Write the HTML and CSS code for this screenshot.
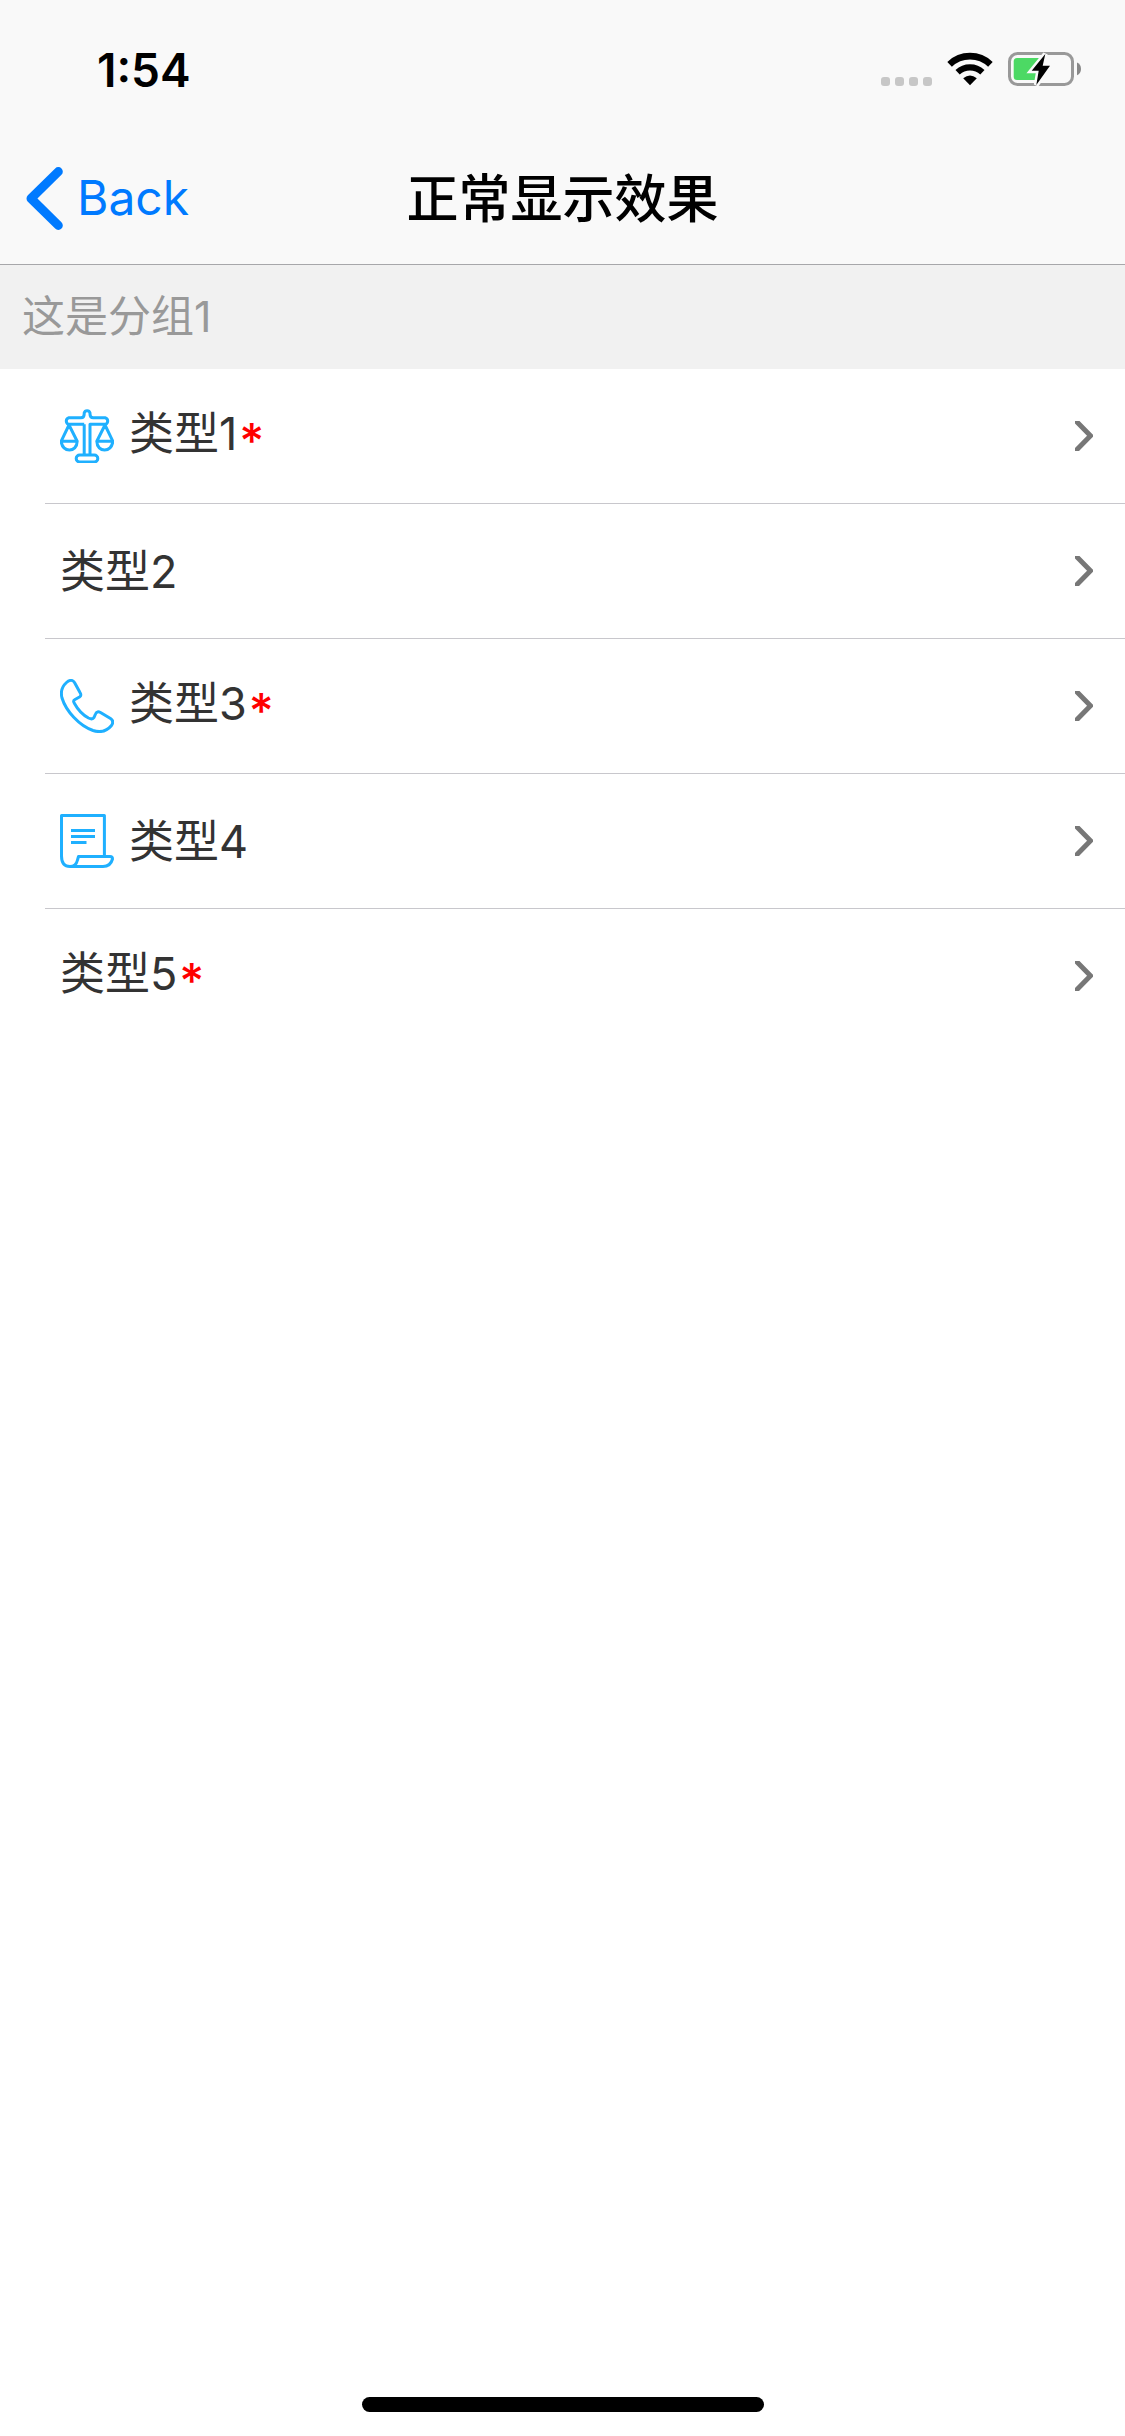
FILE: index.html
```html
<!DOCTYPE html>
<html lang="zh-CN">
<head>
<meta charset="utf-8">
<meta name="viewport" content="width=device-width, initial-scale=1">
<title>正常显示效果</title>
<link rel="stylesheet" href="styles.css">
</head>
<body>
<div class="screen">
  <header class="top">
    <div class="status">
      <time class="clock">1:54</time>
      <div class="indicators">
        <svg width="51" height="9" viewBox="0 0 51 9" fill="#c7c7c7" aria-hidden="true">
          <rect x="0" width="9" height="9" rx="3"/><rect x="14" width="9" height="9" rx="3"/><rect x="28" width="9" height="9" rx="3"/><rect x="42" width="9" height="9" rx="3"/>
        </svg>
        <svg width="46" height="34" viewBox="0 0 46 34" aria-hidden="true">
          <path d="M2.6 12.3A29.5 29.5 0 0 1 43.4 12.3" fill="none" stroke="#000" stroke-width="6.6"/>
          <path d="M10.6 20.2A18.2 18.2 0 0 1 35.4 20.2" fill="none" stroke="#000" stroke-width="6.2"/>
          <path d="M16.2 26.3Q23 20.7 29.8 26.3L23 33.2Z"/>
        </svg>
        <svg width="73" height="34" viewBox="0 0 73 34" aria-hidden="true">
          <rect x="1.5" y="1.5" width="63" height="31" rx="8" fill="none" stroke="#999" stroke-width="3"/>
          <path d="M69 10.6Q73 12.4 73 17T69 23.2Z" fill="#888"/>
          <path d="M9 6H33L27 28H9Q5.700 28 5.700 24.500V9.500Q5.700 6 9 6Z" fill="#4cd964"/>
          <path d="M37.300 2L34.700 13.700H42L28.300 33L30.700 18.700H23.700Z" fill="#000" stroke="#f9f9f9" stroke-width="5" paint-order="stroke"/>
        </svg>
      </div>
    </div>
    <nav class="nav">
      <a class="back" href="#">
        <svg width="37" height="63" viewBox="0 0 37 63" fill="none" stroke="#007aff" stroke-width="9" stroke-linecap="round" stroke-linejoin="round" aria-hidden="true"><path d="M32.300 4.600L5 31.500L32.300 58.400"/></svg>
        <span>Back</span>
      </a>
      <h1 class="title">正常显示效果</h1>
    </nav>
  </header>

  <main class="content">
    <h2 class="group">这是分组1</h2>
    <ul class="list">
      <li class="item"><a class="row" href="#">
        <svg class="icon" viewBox="0 0 54 54" aria-hidden="true">
          <path d="M24.200 15.300H8.500A3.500 3.500 0 0 1 8.500 8.800H21Q24.200 8.800 24.200 5V4A3 3 0 0 1 30 4V5Q30 8.800 33.200 8.800H45.500A3.500 3.500 0 0 1 45.500 15.300H30V46M24.200 15.300V46"/>
          <rect x="16.200" y="46" width="21.600" height="7" rx="3.500"/>
          <path d="M9 16L1.200 32.200H17.200ZM1.200 32.200C2 44 17 44 17.200 32.200M45 16L36.800 32.200H52.800ZM36.800 32.200C37 44 52 44 52.800 32.200"/>
        </svg>
        <span class="label raised">类型1<span class="star">*</span></span>
        <svg class="chevron" viewBox="0 0 18 30" aria-hidden="true"><path d="M1 0L15.500 14.800L1.500 29"/></svg>
      </a></li>
      <li class="item"><a class="row" href="#">
        <span class="label">类型2</span>
        <svg class="chevron" viewBox="0 0 18 30" aria-hidden="true"><path d="M1 0L15.500 14.800L1.500 29"/></svg>
      </a></li>
      <li class="item"><a class="row" href="#">
        <svg class="icon" viewBox="0 0 54 54" aria-hidden="true">
          <path d="M6.500 3.500C9.500 0.800 12.500 0.500 14.500 3.500L20 13.500C21.500 16 21 17 19.500 18L15 20.500C13 21.600 13.400 22.500 14.500 24.500C18 31 22 35.500 28.500 39Q32.500 41 34 38.500L35.500 35C36.500 32.500 38.500 32.500 40.500 33.500L50.500 39.500C53.500 41.500 53.500 43.500 51.500 46.500C47 52 41 54 33 51.500C19 46.500 6 32 2 19C0.500 13 2 7.500 6.500 3.500Z"/>
        </svg>
        <span class="label raised">类型3<span class="star">*</span></span>
        <svg class="chevron" viewBox="0 0 18 30" aria-hidden="true"><path d="M1 0L15.500 14.800L1.500 29"/></svg>
      </a></li>
      <li class="item"><a class="row" href="#">
        <svg class="icon" viewBox="0 0 54 54" aria-hidden="true">
          <path d="M44.400 42V1.500H1.500V42Q1.500 52.500 10 52.500Q16 52.500 17.500 46L18.500 42.500H50Q52.500 42.500 52.500 45Q50.500 52.500 43 52.500H10"/>
          <path d="M11 16.500H35M11 22.500H35M11 28.500H26.500"/>
        </svg>
        <span class="label">类型4</span>
        <svg class="chevron" viewBox="0 0 18 30" aria-hidden="true"><path d="M1 0L15.500 14.800L1.500 29"/></svg>
      </a></li>
      <li class="item"><a class="row" href="#">
        <span class="label raised">类型5<span class="star">*</span></span>
        <svg class="chevron" viewBox="0 0 18 30" aria-hidden="true"><path d="M1 0L15.500 14.800L1.500 29"/></svg>
      </a></li>
    </ul>
  </main>

  <footer class="home"><div class="home-bar"></div></footer>
</div>
</body>
</html>
```
FILE: styles.css
```css
* { box-sizing: border-box; }

body {
  margin: 0;
  background: #fff;
  color: #333;
  font-family: Inter, "Noto Sans CJK SC", sans-serif;
}

svg { display: block; flex: none; }
a { color: inherit; text-decoration: none; }

.screen {
  display: flex;
  flex-direction: column;
  min-height: 100vh;
}

.top {
  background: #f9f9f9;
  border-bottom: 1px solid #a7a7aa;
}

.status {
  display: flex;
  justify-content: space-between;
  align-items: center;
  height: 132px;
  padding: 6px 44px 0 97px;
}

.clock {
  padding-top: 2px;
  color: #000;
  font-size: 46px;
  font-weight: 600;
  line-height: 60px;
}

.indicators {
  display: flex;
  align-items: flex-end;
  gap: 15px;
}

.nav {
  display: grid;
  grid-template-columns: 1fr auto 1fr;
  align-items: center;
  height: 132px;
  padding: 0 26px;
}

.back {
  display: flex;
  align-items: center;
  gap: 14px;
  color: #007aff;
  font-size: 48px;
  line-height: 64px;
}

.title {
  margin: 0;
  padding-top: 3px;
  color: #000;
  font-size: 52px;
  font-weight: 500;
  line-height: 64px;
}

.content { flex: 1; }

.group {
  margin: 0;
  padding: 19px 22px 21px;
  background: #f1f1f1;
  color: #999;
  font-size: 43px;
  font-weight: 400;
  line-height: 64px;
}

.list {
  margin: 0;
  padding: 0 0 0 45px;
  list-style: none;
}

.item + .item { border-top: 1px solid #c8c7cc; }

.row {
  display: flex;
  align-items: center;
  gap: 15px;
  height: 134px;
  padding: 0 32px 0 15px;
}

.icon {
  width: 54px;
  height: 54px;
  fill: none;
  stroke: #1fb0ff;
  stroke-width: 3;
  stroke-linejoin: round;
}

.label {
  flex: 1;
  padding-top: 2px;
  font-size: 45px;
  line-height: 64px;
}

.raised { padding: 0 0 4px; }

.star {
  margin-left: 2px;
  color: #f00;
  font-size: 48px;
  font-weight: 500;
  line-height: 1;
  vertical-align: -8px;
}

.chevron {
  width: 18px;
  height: 30px;
  fill: none;
  stroke: #777;
  stroke-width: 5;
  stroke-linecap: round;
}

.home {
  display: flex;
  justify-content: center;
  padding-bottom: 24px;
}

.home-bar {
  width: 402px;
  height: 15px;
  border-radius: 8px;
  background: #000;
}
```
